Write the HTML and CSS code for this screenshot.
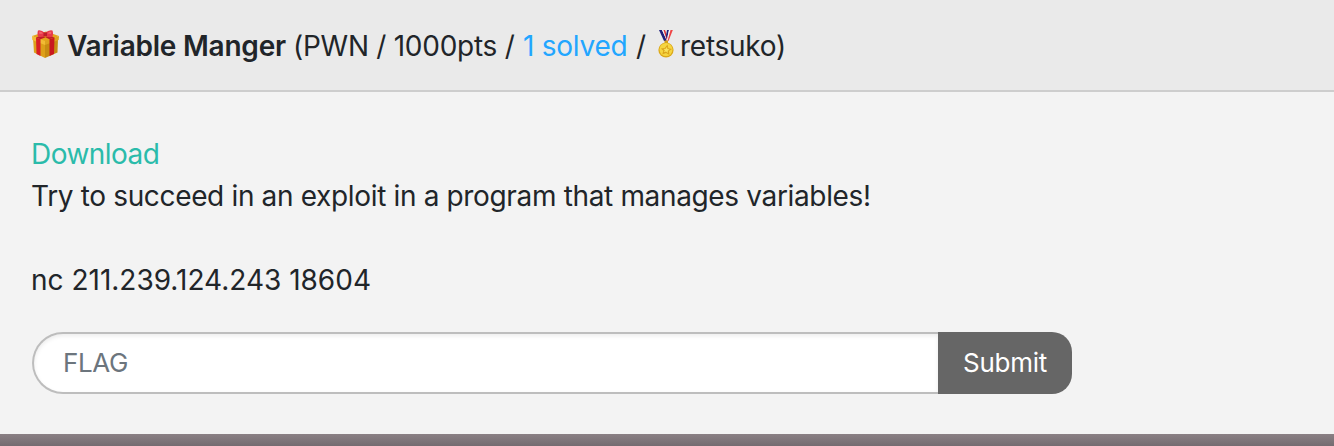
FILE: index.html
```html
<!DOCTYPE html>
<html lang="en">
<head>
<meta charset="utf-8">
<title>Variable Manger</title>
<link rel="stylesheet" href="styles.css">
</head>
<body>
<section class="card">
  <header class="card-header">
    <svg class="gift" viewBox="0 0 28 28" aria-hidden="true">
      <path fill="#e5a51c" d="M0 6 14 1.500 27 6 13 12z"/>
      <path fill="#dda019" d="M1 8l12 4.500V28L2 22.500z"/>
      <path fill="#c78c12" d="M26 8l-13 4.500V28L25.500 22.500z"/>
      <path fill="#f1bb35" d="M0 6l13 5v4L.3 10z"/>
      <path fill="#dda31f" d="M27 6 13 11v4l13.700-5z"/>
      <path fill="#d81f26" d="M4 7.500l4.500 1.800V26l-4-2z"/>
      <path fill="#c9181f" d="M22.500 7.500l-5 1.800V26l4.500-2z"/>
      <path fill="#c21c28" d="M4 7.500 15 3.500l6 1L8.500 9.300zM22.500 7.500 12 3.500 8 4.800l9.500 4.500z"/>
      <path fill="#e8394a" d="M13 3Q9-.5 6 .5q-1 3 0 6Q10 8 13 5.500q4 3 7.500 1 1-3 0-6Q17-.5 13 3z"/>
      <path fill="#f5636e" d="M7 1.500q3 0 4 2L7.500 4zM19.500 1.500q-3 0-4 2L19 4z"/>
      <path fill="#bd1d2b" d="M11.500 2.500h3.500v4h-3.500z"/>
    </svg>
    <strong class="title">Variable Manger</strong>
    <span class="meta-start">(PWN / 1000pts /</span>
    <a class="solved">1 solved</a>
    <span class="slash">/</span>
    <svg class="medal" viewBox="0 0 16 28" aria-hidden="true">
      <path fill="#20207c" d="M1 0h3l5 11H6z"/>
      <path fill="#f5f5fa" d="M4 0h1.500l4 10L9 11z"/>
      <path fill="#e0353c" d="M5.500 0H7l3 8-1 3z"/>
      <path fill="#20207c" d="M9 0h2L9 9 8 6z"/>
      <path fill="#f5f5fa" d="M11 0h1.500L9.800 11H8.600z"/>
      <path fill="#f04444" d="M12.500 0h2.300L10.500 11H9.500z"/>
      <path fill="#d4a017" d="M6.500 10.500h3.500v3H6.500z"/>
      <circle cx="8" cy="20" r="7.600" fill="#dba81a"/>
      <circle cx="8" cy="19.600" r="6.500" fill="#f6d540"/>
      <path fill="#dba51b" d="m9.500 14.500.8 3.700 3.700.8-3 2 .4 4-3.400-2-3.800 1.600 1.200-3.800-2.600-2.400 4-.3z"/>
      <path fill="#fae35c" d="m9 16.800.4 2.200 2.300.6-2 1.100.1 2.200-1.800-1.400-2.100.7.900-2-1.300-1.300 2.200-.1z"/>
    </svg>
    <span class="author">retsuko)</span>
  </header>
  <div class="card-body">
    <a class="download">Download</a>
    <p class="description">Try to succeed in an exploit in a program that manages variables!</p>
    <p class="address">nc 211.239.124.243 18604</p>
    <form class="flag-form">
      <input class="flag-input" type="text" placeholder="FLAG">
      <button class="submit" type="button"><span class="submit-label">Submit</span></button>
    </form>
  </div>
</section>
</body>
</html>
```
FILE: styles.css
```css
* { box-sizing: border-box; }
body {
  margin: 0;
  height: 446px;
  overflow: hidden;
  background: linear-gradient(#8a8084 434px, #746b70 446px);
  color: #212529;
  font: 28px/42px Inter, "Liberation Sans", sans-serif;
}
.card { height: 434px; background: #f3f3f3; }
.card-header {
  display: flex;
  align-items: center;
  height: 92px;
  padding: 2px 32px 0;
  background: #eaeaea;
  border-bottom: 2px solid #cdcdcd;
  white-space: nowrap;
}
.gift { width: 28px; height: 28px; margin: 0 7px 4px 0; }
.title { width: 226px; font-weight: 600; letter-spacing: -.23px; }
.meta-start { width: 230px; letter-spacing: -.27px; }
.solved { width: 113px; color: #22a6ff; letter-spacing: -.25px; }
.slash { width: 21px; }
.medal { width: 16px; height: 28px; margin: 0 6px 4px 1px; }
.author { letter-spacing: -.25px; }
.card-body { display: flex; flex-direction: column; padding: 41px 31px 0; }
.download { color: #2abbaa; letter-spacing: -.55px; }
p { margin: 0; white-space: nowrap; }
.description { letter-spacing: -.345px; }
.address { margin-top: 42px; }
.flag-form { display: flex; width: 1040px; height: 62px; margin: 31px 0 0 1px; }
.flag-input {
  flex: 1;
  min-width: 0;
  padding: 0 29px;
  border: 2px solid #bdbdbd;
  border-right: 0;
  border-radius: 31px 0 0 31px;
  background: #fff;
  box-shadow: inset 0 2px 4px rgba(0, 0, 0, .08);
  font: inherit;
  font-size: 26px;
  letter-spacing: -.35px;
}
.flag-input::placeholder { color: #6c757d; opacity: 1; }
.submit {
  width: 134px;
  padding: 0;
  border: 0;
  border-radius: 0 20px 20px 0;
  background: #666;
  color: #fff;
  font: inherit;
  font-size: 26px;
  letter-spacing: -.3px;
}
```
